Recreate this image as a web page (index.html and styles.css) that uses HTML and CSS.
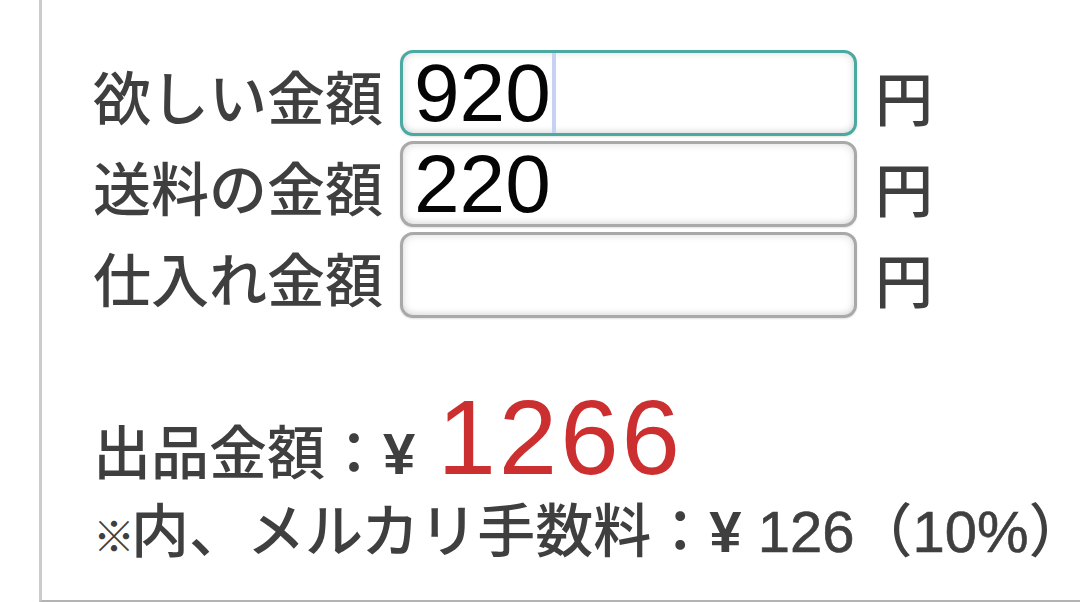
FILE: index.html
```html
<!DOCTYPE html>
<html lang="ja">
<head>
<meta charset="utf-8">
<title>出品金額計算</title>
<link rel="stylesheet" href="styles.css">
</head>
<body>
<div class="panel">
  <div class="form">
    <div class="row">
      <span class="label">欲しい金額</span>
      <div class="field focused" role="textbox"><span class="val">920</span><span class="caret"></span></div>
      <span class="unit">円</span>
    </div>
    <div class="row">
      <span class="label">送料の金額</span>
      <div class="field" role="textbox"><span class="val">220</span></div>
      <span class="unit">円</span>
    </div>
    <div class="row">
      <span class="label">仕入れ金額</span>
      <div class="field" role="textbox"></div>
      <span class="unit">円</span>
    </div>
  </div>
  <div class="result">
    <p class="total">出品金額：<span class="yen">¥</span> <span class="price">1266</span></p>
    <p class="fee"><span class="kome">※</span>内、メルカリ手数料：<span class="yen">¥</span> <span class="num">126</span>（<span class="num">10%</span><span class="close">）</span></p>
  </div>
</div>
</body>
</html>
```
FILE: styles.css
```css
html, body {
  margin: 0;
  padding: 0;
  background: #ffffff;
}
body {
  font-family: "Liberation Sans", "Noto Sans CJK JP", sans-serif;
  color: #3f3f3f;
  font-weight: 500;
}
.panel {
  box-sizing: border-box;
  width: 1041px;
  height: 602px;
  margin-left: 39px;
  border-left: 3px solid #cbcbcb;
  border-bottom: 2px solid #b3b3b3;
  padding: 50px 0 0 51px;
}
.form {
  display: flex;
  flex-direction: column;
  gap: 5px;
}
.row {
  display: flex;
  align-items: center;
  height: 86px;
}
.label {
  font-size: 58px;
  line-height: 1;
  padding-top: 13px;
  width: 290px;
  white-space: nowrap;
}
.field {
  box-sizing: border-box;
  width: 457px;
  height: 86px;
  margin-left: 17px;
  border: 3px solid #a9a9a9;
  border-radius: 13px;
  background: #ffffff;
  box-shadow: inset 0 0 8px rgba(0, 0, 0, 0.14), inset 0 -3px 5px rgba(0, 0, 0, 0.04), 0 1px 2px rgba(0, 0, 0, 0.12);
  display: flex;
  align-items: center;
  padding-left: 11px;
  color: #050505;
  font-size: 82px;
  font-weight: 400;
  line-height: 1;
}
.field.focused {
  border-color: #4aa9a1;
}
.caret {
  align-self: stretch;
  width: 4px;
  margin-left: 1px;
  background: #c6d1f4;
}
.unit {
  font-size: 58px;
  line-height: 1;
  padding-top: 15px;
  margin-left: 18px;
}
.result {
  margin-top: 67px;
}
.total {
  margin: 0;
  font-size: 58px;
  line-height: 1;
  white-space: nowrap;
}
.yen {
  font-weight: 700;
}
.price {
  margin-left: 6px;
  font-size: 105px;
  line-height: 1;
  letter-spacing: 3px;
  color: #cc2f2f;
  font-weight: 400;
}
.fee {
  margin: 10px 0 0;
  font-size: 58px;
  line-height: 64px;
  white-space: nowrap;
}
.num {
  -webkit-text-stroke: 0.6px #3f3f3f;
}
.close {
  letter-spacing: -14px;
}
.kome {
  font-size: 42px;
  font-weight: 900;
  letter-spacing: -4px;
}
```
